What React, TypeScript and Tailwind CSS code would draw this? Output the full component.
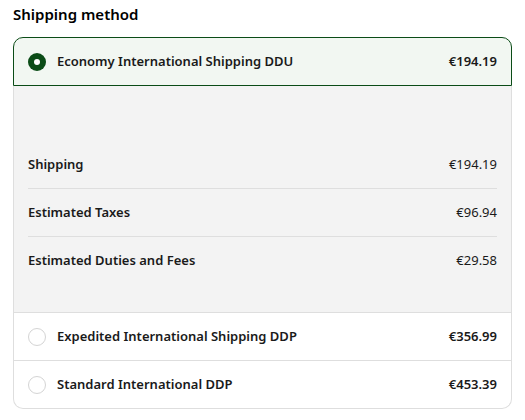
import React from "react";

function Row({ label, value, last }: { label: string; value: string; last?: boolean }) {
  return (
    <div className={`flex h-12 items-center justify-between ${last ? "" : "border-b border-[#dedede]"}`}>
      <span className="font-semibold">{label}</span>
      <span>{value}</span>
    </div>
  );
}

function Option({ label, price, last }: { label: string; price: string; last?: boolean }) {
  return (
    <div
      className={`flex h-12 items-center border-x border-[#dedede] bg-white px-[14px] ${
        last ? "rounded-b-[10px] border-b" : "border-b"
      }`}
    >
      <span className="h-[18px] w-[18px] rounded-full border border-[#d4d4d4] bg-white" />
      <span className="ml-[11px] flex-1 font-semibold">{label}</span>
      <span className="font-semibold">{price}</span>
    </div>
  );
}

export default function App() {
  return (
    <div
      className="h-[420px] w-[525px] bg-white px-[13px] text-[13px] text-[#1a1a1a]"
      style={{ fontFamily: '"Noto Sans", "Open Sans", sans-serif' }}
    >
      <h2 className="h-[37px] pt-[3px] text-[15px] font-semibold leading-[22px] text-black">Shipping method</h2>
      <div className="w-[499px]">
        <div className="flex h-[49px] items-center rounded-t-[10px] border border-[#0b4c17] bg-[#f2f7f2] px-[14px]">
          <span className="flex h-[18px] w-[18px] items-center justify-center rounded-full bg-[#0b4c17]">
            <span className="h-[6px] w-[6px] rounded-full bg-white" />
          </span>
          <span className="ml-[11px] flex-1 font-semibold">Economy International Shipping DDU</span>
          <span className="font-semibold">€194.19</span>
        </div>
        <div className="border-x border-b border-[#dedede] bg-[#f3f3f3] px-[14px] pb-[27px] pt-[55px]">
          <Row label="Shipping" value="€194.19" />
          <Row label="Estimated Taxes" value="€96.94" />
          <Row label="Estimated Duties and Fees" value="€29.58" last />
        </div>
        <Option label="Expedited International Shipping DDP" price="€356.99" />
        <Option label="Standard International DDP" price="€453.39" last />
      </div>
    </div>
  );
}
